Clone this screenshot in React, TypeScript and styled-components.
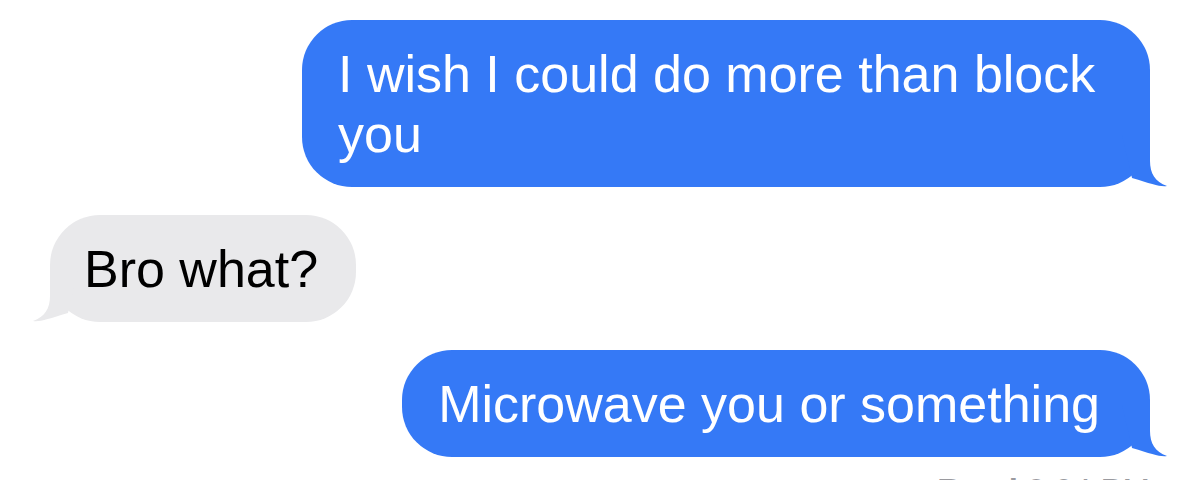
import React from "react";
import styled, { createGlobalStyle } from "styled-components";

type Side = "sent" | "received";

interface Message {
  id: number;
  side: Side;
  text: string;
}

const messages: Message[] = [
  { id: 1, side: "sent", text: "I wish I could do more than block you" },
  { id: 2, side: "received", text: "Bro what?" },
  { id: 3, side: "sent", text: "Microwave you or something" },
];

const BLUE = "#3579f6";
const GREY = "#e9e9eb";

const GlobalStyle = createGlobalStyle`
  html, body {
    margin: 0;
    padding: 0;
    background: #ffffff;
  }
  body {
    font-family: "Liberation Sans", Arial, sans-serif;
    -webkit-font-smoothing: antialiased;
  }
`;

const Thread = styled.div`
  width: 1200px;
  height: 480px;
  overflow: hidden;
  box-sizing: border-box;
  padding: 20px 50px 0 50px;
  display: flex;
  flex-direction: column;
  gap: 28px;
`;

const Row = styled.div<{ $side: Side }>`
  display: flex;
  justify-content: ${(p) => (p.$side === "sent" ? "flex-end" : "flex-start")};
`;

const Bubble = styled.div<{ $side: Side }>`
  position: relative;
  max-width: 848px;
  box-sizing: border-box;
  padding: ${(p) => (p.$side === "sent" ? "24px 50px 23px 36px" : "24px 38px 23px 34px")};
  border-radius: 50px;
  font-size: 52px;
  line-height: 60px;
  background: ${(p) => (p.$side === "sent" ? BLUE : GREY)};
  color: ${(p) => (p.$side === "sent" ? "#ffffff" : "#000000")};
`;

// little curled tail hanging off the bottom corner of a bubble
const Tail = styled.svg<{ $side: Side }>`
  position: absolute;
  bottom: 0;
  width: 46px;
  height: 52px;
  ${(p) =>
    p.$side === "sent"
      ? "right: -18px;"
      : "left: -18px; transform: scaleX(-1);"}
`;

const Receipt = styled.div`
  margin-top: -14px;
  text-align: right;
  font-size: 33px;
  line-height: 40px;
  color: #9a9a9f;

  b {
    font-weight: 700;
  }
`;

const BubbleTail = ({ side }: { side: Side }) => (
  <Tail $side={side} viewBox="0 0 46 52">
    <path
      d="M0 0 H28 V26 C28 38 33 47 45 51 C38 52 30 49 10 43 L0 0 Z"
      fill={side === "sent" ? BLUE : GREY}
    />
  </Tail>
);

export default function App() {
  return (
    <>
      <GlobalStyle />
      <Thread>
        {messages.map((m) => (
          <Row key={m.id} $side={m.side}>
            <Bubble $side={m.side}>
              {m.text}
              <BubbleTail side={m.side} />
            </Bubble>
          </Row>
        ))}
        <Receipt>
          <b>Read</b> 8:04 PM
        </Receipt>
      </Thread>
    </>
  );
}
